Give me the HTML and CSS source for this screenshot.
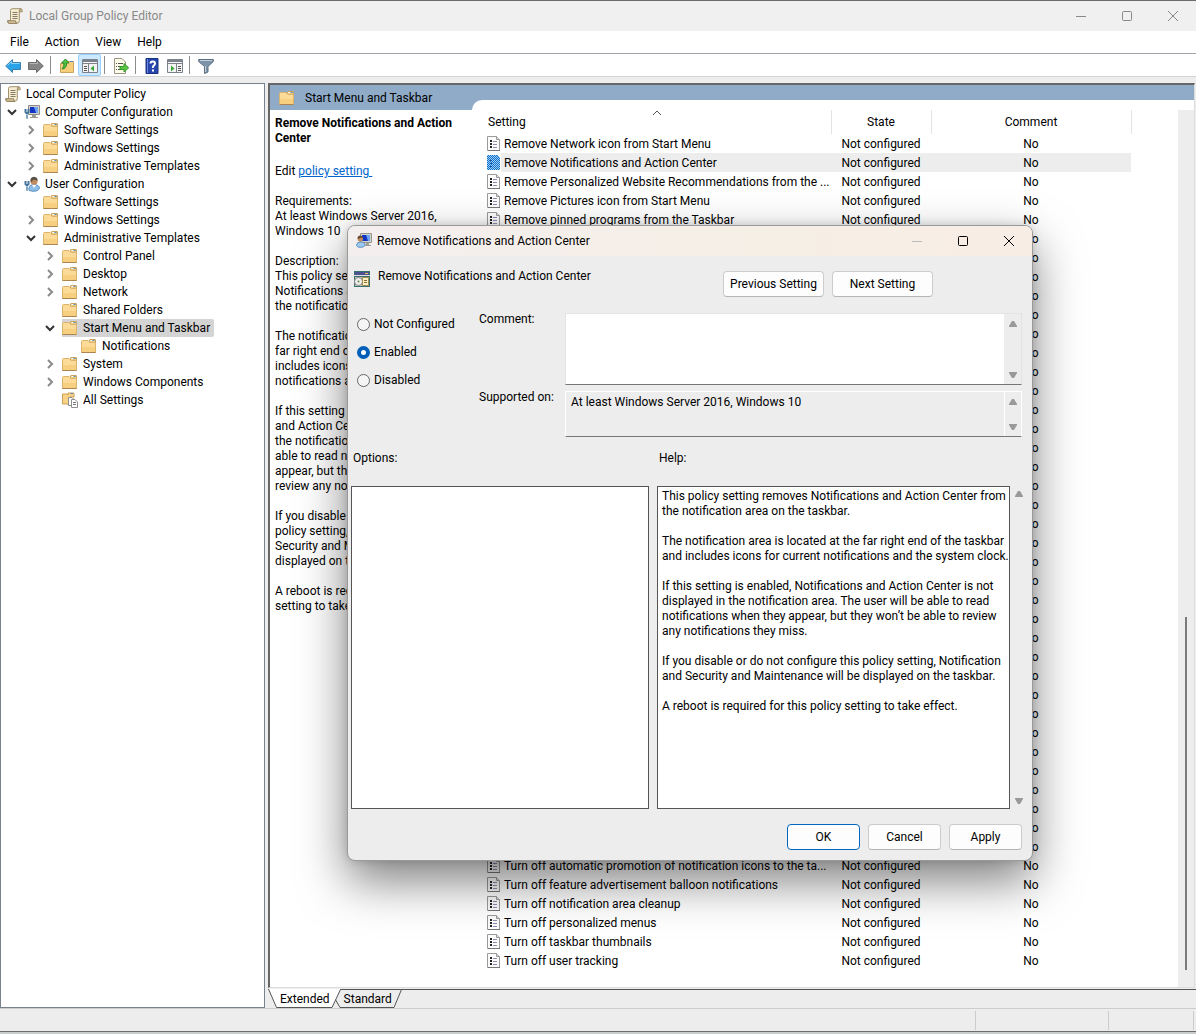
FILE: index.html
```html
<!DOCTYPE html>
<html lang="en">
<head>
  <meta charset="UTF-8" />
  <meta name="viewport" content="width=device-width, initial-scale=1" />
  <title>Local Group Policy Editor</title>
  <link rel="stylesheet" href="styles.css">
</head>
<body>
  <!-- shared icons -->
  <svg class="sprite" aria-hidden="true">
    <symbol id="scroll" viewBox="0 0 16 16">
      <path d="M3.5 2.5 Q3.5 .7 5.5 .7 H13.8 Q12.3 1.2 12.3 3 V12.5 Q12.3 15.3 9.8 15.3 H2 Q.5 15.2 .6 12.7 H3.5Z" fill="#f6ecd0" stroke="#a09070"/>
      <path d="M12.3 3.8 H15.2 V2.5 Q15.2 .7 13.6 .7Z" fill="#d8c391" stroke="#a09070"/>
      <path d="M.8 12.8 H8.6 Q8.6 15.2 10 15.3 H2 Q.7 15 .8 12.8Z" fill="#dcc899" stroke="#8f8062"/>
      <path d="M5.5 4.5H10.5M5.5 6.5H10.5M5.5 8.5H10.5M5.5 10.5H10.5" stroke="#857a66" fill="none"/>
    </symbol>
    <symbol id="folder" viewBox="0 0 16 16">
      <path d="M8.5 4 V2 Q8.5 1.5 9 1.5 H14 Q14.5 1.5 14.5 2 V6 H8.5Z" fill="#f0cd85" stroke="#c9a45e"/>
      <path d="M9.5 2.5H11.5" stroke="#fff"/><path d="M11.5 2.5H13.5" stroke="#4b8fd0"/>
      <path d="M.5 3.5 Q.5 2.5 1.5 2.5 H7 L9 4.5 H14.5 V14.5 H.5Z" fill="#fbdb97" stroke="#dcb36a"/>
      <path d="M1 9H14V14H1Z" fill="#f7cf80"/>
      <path d="M.5 14.5H14.5" stroke="#ab8550"/>
    </symbol>
    <symbol id="computer" viewBox="0 0 16 16">
      <path d="M4.5 1.5H15.5V10.5H4.5Z" fill="#d5d3c8" stroke="#8d8c86"/>
      <path d="M6 3H14V9H6Z" fill="#1235c4"/><path d="M10 3H14V9H12Z" fill="#6ba2f4"/>
      <path d="M8 11H12V13H14V14H6V13H8Z" fill="#9c9b95"/>
      <path d="M1.5 5V8L3 9.5L4.5 8V5M3 9V14.5" stroke="#44739b" stroke-width="2" fill="none"/>
      <path d="M3 10V14" stroke="#b9d9ee" fill="none"/>
    </symbol>
    <symbol id="user" viewBox="0 0 16 16">
      <path d="M5 14.5 Q4 9 9.5 8.5 Q15.5 8.7 15.5 12.5 Q14 15.5 9 15.3Z" fill="#8fc0ea" stroke="#5a8fc0"/>
      <path d="M8 8.7L10 12L12.3 8.7Z" fill="#fff"/>
      <circle cx="10" cy="5.3" r="3.5" fill="#c08b5f"/>
      <path d="M6.5 5 Q6 1 10 .7 Q14 1 13.5 5 Q11 3 9 4 Q8 6 7 6Z" fill="#5a5148"/>
      <path d="M1.5 5V8L3 9.5L4.5 8V5M3 9V14.5" stroke="#44739b" stroke-width="2" fill="none"/>
      <path d="M3 10V14" stroke="#b9d9ee" fill="none"/>
    </symbol>
    <symbol id="userpc" viewBox="0 0 16 16">
      <path d="M4.5 .5H15.5V9.5H4.5Z" fill="#d5d3c8" stroke="#96958f"/>
      <path d="M6 2H14V8H6Z" fill="#1235c4"/><path d="M10 2H14V8H12Z" fill="#6ba2f4"/>
      <path d="M10 10H13V12H15V13H9Z" fill="#9c9b95"/>
      <circle cx="4.3" cy="6" r="2.7" fill="#c08b5f"/>
      <path d="M1.5 5.5 Q1.5 2.5 4.3 2.5 Q6.5 2.5 6.8 5 Q4 4 3 6Z" fill="#6a4a30"/>
      <path d="M.5 12.5 Q.5 9 4.5 9 Q9 9 9 12.5 Q8 14.5 4 14.3 Q1 14.3 .5 12.5Z" fill="#9cc9ef" stroke="#5a8fc0"/>
    </symbol>
    <symbol id="allset" viewBox="0 0 16 16">
      <path d="M.5 2H5L6 3V1H12V5H8V12H.5Z" fill="#f8d287" stroke="#cfa055"/>
      <path d="M8.5 1.5H11" stroke="#4b8fd0"/>
      <path d="M6.5 5.5H10L12 7.5V13.5H6.5Z" fill="#fff" stroke="#8e8e8e"/>
      <path d="M9.5 7.5H13L15.5 10V15.5H9.5Z" fill="#fff" stroke="#8e8e8e"/>
      <path d="M11 10.5H14M11 12.5H14" stroke="#777"/>
    </symbol>
    <symbol id="policy" viewBox="0 0 14 16">
      <path d="M.5 .5H9.5L12.5 3.5V14.5H.5Z" fill="#fcfcfc" stroke="#9a9a9a"/>
      <path d="M9.5 .5V3.5H12.5" fill="#ddd" stroke="#9a9a9a"/>
      <path d="M1 14.5H13" stroke="#777"/>
      <path d="M3 5H5M3 8H5M3 11H5" stroke="#222" stroke-width="2"/>
      <path d="M6 5.5H10M6 8.5H10M6 11.5H10" stroke="#8b8bb0"/>
    </symbol>
    <symbol id="policy-on" viewBox="0 0 14 16">
      <path d="M0 0H10L13 3V15H0Z" fill="#0a71cf"/>
      <path d="M0 .5H10M0 2.5H13M0 4.5H13M0 6.5H13M0 8.5H13M0 10.5H13M0 12.5H13M0 14.5H13" stroke="#9fcdf2" stroke-dasharray="1 1"/>
      <path d="M1 1.5H11M1 3.5H13M1 5.5H13M1 7.5H13M1 9.5H13M1 11.5H13M1 13.5H13" stroke="#9fcdf2" stroke-dasharray="1 1"/>
      <path d="M3 5.5H5M3 8.5H5M3 11.5H5" stroke="#0a4c9e"/>
    </symbol>
    <symbol id="right" viewBox="0 0 10 10"><path d="M3 1L7 5L3 9" fill="none" stroke="#8a8a8a" stroke-width="2"/></symbol>
    <symbol id="down" viewBox="0 0 10 10"><path d="M1 3L5 7L9 3" fill="none" stroke="#333" stroke-width="2"/></symbol>
    <symbol id="min" viewBox="0 0 12 12"><path d="M1 6.5H11" stroke="currentColor"/></symbol>
    <symbol id="max" viewBox="0 0 12 12"><rect x="1.5" y="1.5" width="9" height="9" rx="1" fill="none" stroke="currentColor"/></symbol>
    <symbol id="close" viewBox="0 0 12 12"><path d="M1 1L11 11M11 1L1 11" stroke="currentColor"/></symbol>
    <symbol id="arrow-up" viewBox="0 0 10 8"><path d="M1 7V6L4 1H6L9 6V7Z" fill="#999"/></symbol>
    <symbol id="arrow-down" viewBox="0 0 10 8"><path d="M1 1H9V2L6 7H4L1 2Z" fill="#999"/></symbol>
  </svg>

  <div class="window">
    <header class="titlebar">
      <svg class="icon"><use href="#scroll"/></svg>
      <h1>Local Group Policy Editor</h1>
      <div class="window-buttons">
        <button type="button" aria-label="Minimize"><svg><use href="#min"/></svg></button>
        <button type="button" aria-label="Maximize"><svg><use href="#max"/></svg></button>
        <button type="button" aria-label="Close"><svg><use href="#close"/></svg></button>
      </div>
    </header>

    <nav class="menubar">
      <button type="button">File</button>
      <button type="button">Action</button>
      <button type="button">View</button>
      <button type="button">Help</button>
    </nav>

    <div class="toolbar">
      <button type="button" aria-label="Back"><svg class="icon" viewBox="0 0 16 16"><path d="M.7 8L7.500 1.500V4.500H15.500V11.500H7.500V14.500Z" fill="#2ba3e8" stroke="#3f7fae"/><path d="M2.500 7.500L6.500 3.500V5.500H14.500" stroke="#8bd5fa" fill="none"/></svg></button>
      <button type="button" aria-label="Forward"><svg class="icon" viewBox="0 0 16 16"><path d="M15.300 8L8.500 1.500V4.500H.5V11.500H8.500V14.500Z" fill="#858585" stroke="#6a6a6a"/><path d="M1.500 5.500H9.500V4" stroke="#b5b5b5" fill="none"/></svg></button>
      <span class="divider"></span>
      <button type="button" aria-label="Up one level"><svg class="icon" viewBox="0 0 16 16"><path d="M1.5 5.5H8L9 3.5H14.5V14.5H1.5Z" fill="#f6cd7b" stroke="#c9a45e"/><path d="M11 3.5H14" stroke="#4b8fd0"/><path d="M3 11Q8 10.5 7.5 5H10L6.5 1L2.5 5H5Q5.5 8.5 3 11Z" fill="#4fc246" stroke="#2d8a2b"/></svg></button>
      <button type="button" class="pressed" aria-label="Show console tree"><svg class="icon" viewBox="0 0 16 16"><path d="M.5 1.5H15.5V14.5H.5Z" fill="#f4f4f4" stroke="#7b828c"/><path d="M1 3H15" stroke="#7b828c" stroke-width="2"/><path d="M1 5.5H15M6.5 6V14" stroke="#7b828c"/><path d="M2 8.5H5M2 10.5H5M2 12.5H5" stroke="#555"/><path d="M12 7.5V13.5L8.5 10.5Z" fill="#38a838"/></svg></button>
      <span class="divider"></span>
      <button type="button" aria-label="Export list"><svg class="icon" viewBox="0 0 16 16"><path d="M1.5 .5H9L12.5 4V15.5H1.5Z" fill="#fdfbe9" stroke="#9b9782"/><path d="M3 5.5H4M5 5.5H10M3 8.5H4M5 8.5H8M3 11.5H4M5 11.5H8" stroke="#555"/><path d="M7 8.5H11V5.5L15.7 9.8L11 14V11.5H7Z" fill="#59c743" stroke="#379a2b"/></svg></button>
      <span class="divider"></span>
      <button type="button" aria-label="Help"><svg class="icon" viewBox="0 0 16 16"><path d="M2 .5H14V15.5H2Z" fill="#2646ae" stroke="#17307f"/><path d="M3.5 1V15" stroke="#6c87dc"/><path d="M6.5 5.5Q6.5 3.5 8.7 3.5Q11 3.5 11 5.5Q11 7 9.5 7.8Q8.8 8.3 8.8 10" fill="none" stroke="#fff" stroke-width="2"/><path d="M8 11.5H10V13.5H8Z" fill="#fff"/></svg></button>
      <button type="button" aria-label="Show action pane"><svg class="icon" viewBox="0 0 16 16"><path d="M.5 1.5H15.5V14.5H.5Z" fill="#f4f4f4" stroke="#7b828c"/><path d="M1 3H15" stroke="#7b828c" stroke-width="2"/><path d="M1 5.5H15M9.5 6V14" stroke="#7b828c"/><path d="M11 8.5H14M11 10.5H14M11 12.5H14" stroke="#555"/><path d="M4 7.5V13.5L7.5 10.5Z" fill="#38a838"/></svg></button>
      <span class="divider"></span>
      <button type="button" aria-label="Filter"><svg class="icon" viewBox="0 0 16 16"><path d="M.7 1.5H15.3V3.5L10 8.5V14L6.5 15.5V8.5L.7 3.5Z" fill="#7c93a8" stroke="#5c6f80"/><path d="M2 2.5H14" stroke="#c5d3df"/><path d="M7.5 8V14" stroke="#c5d3df"/></svg></button>
    </div>

    <main class="workspace">
      <section class="tree" aria-label="Console tree">
        <ul>
          <li class="row level-0"><svg class="icon"><use href="#scroll"/></svg><span>Local Computer Policy</span></li>
          <li class="row level-1"><svg class="chevron"><use href="#down"/></svg><svg class="icon"><use href="#computer"/></svg><span>Computer Configuration</span></li>
          <li class="row level-2"><svg class="chevron"><use href="#right"/></svg><svg class="icon"><use href="#folder"/></svg><span>Software Settings</span></li>
          <li class="row level-2"><svg class="chevron"><use href="#right"/></svg><svg class="icon"><use href="#folder"/></svg><span>Windows Settings</span></li>
          <li class="row level-2"><svg class="chevron"><use href="#right"/></svg><svg class="icon"><use href="#folder"/></svg><span>Administrative Templates</span></li>
          <li class="row level-1"><svg class="chevron"><use href="#down"/></svg><svg class="icon"><use href="#user"/></svg><span>User Configuration</span></li>
          <li class="row level-2"><svg class="chevron"></svg><svg class="icon"><use href="#folder"/></svg><span>Software Settings</span></li>
          <li class="row level-2"><svg class="chevron"><use href="#right"/></svg><svg class="icon"><use href="#folder"/></svg><span>Windows Settings</span></li>
          <li class="row level-2"><svg class="chevron"><use href="#down"/></svg><svg class="icon"><use href="#folder"/></svg><span>Administrative Templates</span></li>
          <li class="row level-3"><svg class="chevron"><use href="#right"/></svg><svg class="icon"><use href="#folder"/></svg><span>Control Panel</span></li>
          <li class="row level-3"><svg class="chevron"><use href="#right"/></svg><svg class="icon"><use href="#folder"/></svg><span>Desktop</span></li>
          <li class="row level-3"><svg class="chevron"><use href="#right"/></svg><svg class="icon"><use href="#folder"/></svg><span>Network</span></li>
          <li class="row level-3"><svg class="chevron"></svg><svg class="icon"><use href="#folder"/></svg><span>Shared Folders</span></li>
          <li class="row level-3 current"><svg class="chevron"><use href="#down"/></svg><svg class="icon"><use href="#folder"/></svg><span>Start Menu and Taskbar</span></li>
          <li class="row level-4"><svg class="chevron"></svg><svg class="icon"><use href="#folder"/></svg><span>Notifications</span></li>
          <li class="row level-3"><svg class="chevron"><use href="#right"/></svg><svg class="icon"><use href="#folder"/></svg><span>System</span></li>
          <li class="row level-3"><svg class="chevron"><use href="#right"/></svg><svg class="icon"><use href="#folder"/></svg><span>Windows Components</span></li>
          <li class="row level-3"><svg class="chevron"></svg><svg class="icon"><use href="#allset"/></svg><span>All Settings</span></li>
        </ul>
      </section>

      <section class="details">
        <div class="pane">
          <div class="side">
            <div class="pane-title"><svg class="icon"><use href="#folder"/></svg><h2>Start Menu and Taskbar</h2></div>
            <div class="description">
              <h3>Remove Notifications and Action
Center</h3>
              <p>Edit <a href="#">policy setting </a></p>
              <p>Requirements:
At least Windows Server 2016,
Windows 10</p>
              <p>Description:
This policy setting removes
Notifications and Action Center from
the notification area on the taskbar.</p>
              <p>The notification area is located at the
far right end of the taskbar and
includes icons for current
notifications and the system clock.</p>
              <p>If this setting is enabled, Notifications
and Action Center is not displayed in
the notification area. The user will be
able to read notifications when they
appear, but they won’t be able to
review any notifications they miss.</p>
              <p>If you disable or do not configure this
policy setting, Notification and
Security and Maintenance will be
displayed on the taskbar.</p>
              <p>A reboot is required for this policy
setting to take effect.</p>
            </div>
          </div>

          <div class="list">
            <div class="list-body">
              <table>
                <thead>
                  <tr>
                    <th class="col-setting">Setting<svg class="sort" viewBox="0 0 10 6"><path d="M1 5L5 1L9 5" fill="none" stroke="#555"/></svg></th>
                    <th class="col-state">State</th>
                    <th class="col-comment">Comment</th>
                    <th class="col-rest"></th>
                  </tr>
                </thead>
                <tbody id="settings"></tbody>
              </table>
              <div class="scrollbar"><span class="thumb"></span></div>
            </div>
          </div>
        </div>

        <div class="tabs">
          <svg class="tab-shape" viewBox="0 0 136 19" aria-hidden="true">
            <path d="M70.5 .5H133.5L126 18.5H72L66.5 9Z" fill="#ededed" stroke="#555"/>
            <path d="M0 0H72.5L64 18.5H8.5L0 0" fill="#fff"/>
            <path d="M.5 0L8.5 18.5H64L72.5 .5" fill="none" stroke="#555"/>
          </svg>
          <button type="button">Extended</button>
          <button type="button">Standard</button>
        </div>
      </section>
    </main>

    <footer class="statusbar"><span></span><span></span><span></span></footer>
  </div>

  <div class="dialog" role="dialog" aria-labelledby="dialog-title">
    <header class="dialog-titlebar">
      <svg class="icon"><use href="#userpc"/></svg>
      <h2 id="dialog-title">Remove Notifications and Action Center</h2>
      <div class="window-buttons">
        <button type="button" class="disabled" aria-label="Minimize" disabled><svg><use href="#min"/></svg></button>
        <button type="button" aria-label="Maximize"><svg><use href="#max"/></svg></button>
        <button type="button" aria-label="Close"><svg><use href="#close"/></svg></button>
      </div>
    </header>

    <form class="policy-form">
      <div class="policy-head">
        <svg class="icon" viewBox="0 0 16 16"><path d="M0 0H16V16H0Z" fill="#38726f"/><path d="M1 1H15V4H1Z" fill="#4d5390"/><path d="M11 2.5H14" stroke="#e8c65a"/><path d="M0 4.5H16" stroke="#ddd"/><path d="M1 6H15V15H1Z" fill="#c9c6b4"/><circle cx="4.5" cy="10.5" r="4" fill="#eee" stroke="#888"/><circle cx="4.5" cy="10.5" r="1" fill="#638a3a"/><path d="M8.5 6.5H14.5V14.5H8.5Z" fill="#fdf0c4" stroke="#a58d52"/><path d="M10 9.5H13M10 11.5H13" stroke="#886c33"/></svg>
        <span class="policy-name">Remove Notifications and Action Center</span>
        <button type="button" class="btn wide">Previous Setting</button>
        <button type="button" class="btn wide">Next Setting</button>
      </div>

      <div class="policy-state">
        <div class="radios">
          <label><input type="radio" name="state" />Not Configured</label>
          <label><input type="radio" name="state" checked />Enabled</label>
          <label><input type="radio" name="state" />Disabled</label>
        </div>
        <div class="fields">
          <label for="comment">Comment:</label>
          <div class="field">
            <textarea id="comment"></textarea>
            <div class="arrows"><svg><use href="#arrow-up"/></svg><svg><use href="#arrow-down"/></svg></div>
          </div>
          <label for="supported">Supported on:</label>
          <div class="field readonly">
            <textarea id="supported" readonly>At least Windows Server 2016, Windows 10</textarea>
            <div class="arrows"><svg><use href="#arrow-up"/></svg><svg><use href="#arrow-down"/></svg></div>
          </div>
        </div>
      </div>

      <div class="panels">
        <h3>Options:</h3>
        <h3>Help:</h3>
        <div class="panel"></div>
        <div class="help">
          <div class="panel">
            <p>This policy setting removes Notifications and Action Center from
the notification area on the taskbar.</p>
            <p>The notification area is located at the far right end of the taskbar
and includes icons for current notifications and the system clock.</p>
            <p>If this setting is enabled, Notifications and Action Center is not
displayed in the notification area. The user will be able to read
notifications when they appear, but they won’t be able to review
any notifications they miss.</p>
            <p>If you disable or do not configure this policy setting, Notification
and Security and Maintenance will be displayed on the taskbar.</p>
            <p>A reboot is required for this policy setting to take effect.</p>
          </div>
          <div class="arrows"><svg><use href="#arrow-up"/></svg><svg><use href="#arrow-down"/></svg></div>
        </div>
      </div>

      <div class="actions">
        <button type="submit" class="btn primary">OK</button>
        <button type="button" class="btn">Cancel</button>
        <button type="button" class="btn">Apply</button>
      </div>
    </form>
  </div>

  <script src="script.js"></script>
</body>
</html>
```
FILE: styles.css
```css
* {
  margin: 0;
  padding: 0;
  box-sizing: border-box;
}
body {
  font-family: "Segoe UI", Roboto, "Open Sans", sans-serif;
  font-size: 12px;
  line-height: 15px;
  color: #000;
  background: #ededed;
  position: relative;
  overflow: hidden;
}
button, textarea {
  font: inherit;
  color: inherit;
}
button {
  background: none;
  border: none;
}
h1, h2, h3 {
  font-size: 12px;
  font-weight: 400;
}
svg {
  display: block;
  flex: none;
}
.sprite {
  position: absolute;
  width: 0;
  height: 0;
}
.icon {
  width: 16px;
  height: 16px;
}

/* main window */
.window {
  display: flex;
  flex-direction: column;
  min-height: 100vh;
  border-top: 1px solid #6b6b6b;
  border-bottom: 2px solid #c9cdcd;
}
.titlebar {
  display: flex;
  align-items: center;
  gap: 6px;
  height: 30px;
  padding-left: 7px;
  background: #f0f0f0;
  color: #888;
}
.window-buttons {
  display: flex;
  margin-left: auto;
}
.window-buttons button {
  display: flex;
  align-items: center;
  justify-content: center;
  width: 46px;
  height: 30px;
}
.window-buttons svg {
  width: 12px;
  height: 12px;
}
.menubar {
  display: flex;
  gap: 16px;
  height: 23px;
  padding: 0 10px;
  background: #fff;
  border-bottom: 1px solid #a0a5ad;
}
.toolbar {
  display: flex;
  align-items: center;
  height: 23px;
  padding-left: 1px;
  background: #fff;
  border-bottom: 1px solid #d4d4d4;
}
.toolbar button {
  display: flex;
  align-items: center;
  justify-content: center;
  width: 23px;
  height: 22px;
  padding-top: 2px;
}
.toolbar .pressed {
  background: #cce8ff;
  border: 1px solid #99d1ff;
  border-radius: 2px;
}
.divider {
  width: 1px;
  height: 18px;
  margin: 0 4px 0 3px;
  background: #8c8c8c;
}
.workspace {
  display: flex;
  flex: 1;
  gap: 3px;
  padding-top: 6px;
}

/* console tree */
.tree {
  width: 265px;
  padding-top: 1px;
  background: #fff;
  border: 1px solid #7a8290;
}
.tree ul {
  list-style: none;
}
.row {
  display: flex;
  align-items: center;
  height: 18px;
}
.row span {
  height: 18px;
  line-height: 18px;
  padding: 0 4px 0 5px;
}
.row .chevron {
  width: 10px;
  height: 10px;
  margin-right: 7px;
}
.level-0 { padding-left: 4px; }
.level-1 { padding-left: 6px; }
.level-2 { padding-left: 25px; }
.level-3 { padding-left: 44px; }
.level-4 { padding-left: 63px; }
.current span {
  background: #d4d4d4;
  border-radius: 0 2px 2px 0;
}
.current .icon {
  background: #d4d4d4;
  height: 18px;
}

/* right side */
.details {
  flex: 1;
  display: flex;
  flex-direction: column;
  min-width: 0;
}
.pane {
  flex: 1;
  display: flex;
  margin-right: 1px;
  background: #fff;
  border: 2px solid #666;
  border-right: 1px solid #ddd;
  border-bottom: 1px solid #ddd;
}
.side {
  width: 202px;
}
.pane-title {
  display: flex;
  align-items: center;
  gap: 10px;
  height: 25px;
  padding: 1px 0 0 9px;
  background: #8fabc8;
}
.description {
  display: flex;
  flex-direction: column;
  gap: 15px;
  padding: 6px 5px;
  white-space: pre;
}
.description h3 {
  font-weight: 700;
  padding-bottom: 3px;
}
a {
  color: #0066cc;
}
.list {
  flex: 1;
  display: flex;
  min-width: 0;
  background: #8fabc8;
  padding-top: 15px;
}
.list-body {
  flex: 1;
  display: grid;
  grid-template-columns: minmax(0, 1fr) 16px;
  padding: 10px 0 0 15px;
  background: #fff;
  border-top-left-radius: 10px;
}
table {
  width: 100%;
  align-self: start;
  table-layout: fixed;
  border-collapse: collapse;
}
th {
  height: 24px;
  font-weight: 400;
  border-right: 1px solid #e3e3e3;
}
th.col-setting {
  position: relative;
  width: 344px;
  text-align: left;
  padding-left: 1px;
}
.sort {
  position: absolute;
  top: 0;
  left: 165px;
  width: 10px;
  height: 6px;
}
.col-state { width: 100px; }
.col-comment { width: 200px; }
th.col-rest { border: none; }
td {
  height: 19px;
  padding-top: 2px;
  text-align: center;
  white-space: nowrap;
}
td:first-child {
  padding-top: 0;
  text-align: left;
}
.setting {
  display: flex;
  align-items: center;
}
.setting svg {
  width: 14px;
  height: 16px;
}
.setting span {
  flex: 1;
  height: 19px;
  line-height: 21px;
  padding-left: 3px;
  overflow: hidden;
}
.selected .setting span,
.selected .shade {
  background: #ededed;
}
.scrollbar {
  display: flex;
  flex-direction: column;
  justify-content: flex-end;
  align-items: center;
  padding-bottom: 17px;
  background: #ededed;
}
.thumb {
  width: 2px;
  height: 41%;
  background: #7a7a7a;
}
.tabs {
  position: relative;
  display: flex;
  gap: 14px;
  height: 19px;
  margin-top: 1px;
  padding-left: 12px;
  border-top: 1px solid #555;
}
.tab-shape {
  position: absolute;
  left: 0;
  top: -1px;
  width: 136px;
  height: 19px;
}
.tabs button {
  position: relative;
  height: 18px;
}
.statusbar {
  display: flex;
  height: 24px;
  padding: 2px 2px 1px 0;
  border-top: 1px solid #ccc;
  border-bottom: 1px solid #6b6b6b;
}
.statusbar span {
  border-right: 1px solid #ccc;
  width: 133px;
}
.statusbar span:first-child {
  flex: 1;
}
.statusbar span:last-child {
  width: 85px;
}

/* policy dialog */
.dialog {
  position: absolute;
  left: 347px;
  top: 225px;
  width: 686px;
  background: #ededed;
  border: 1px solid #999;
  border-radius: 8px;
  box-shadow: 0 20px 48px rgba(0,0,0,0.5), 0 0 10px rgba(0,0,0,0.15);
  overflow: hidden;
}
.dialog-titlebar {
  display: flex;
  align-items: center;
  gap: 5px;
  height: 30px;
  padding-left: 8px;
  background: linear-gradient(90deg, #f4efef, #f6efe6 60%, #f8ede4);
}
.dialog-titlebar .disabled {
  color: #bbb;
}
.policy-form {
  padding: 0 10px 10px 3px;
}
.policy-head {
  display: flex;
  gap: 8px;
  padding: 15px 89px 16px 3px;
}
.policy-name {
  flex: 1;
  height: 15px;
  line-height: 10px;
}
.btn {
  width: 73px;
  height: 26px;
  background: #fdfdfd;
  border: 1px solid #ccc;
  border-bottom-color: #b5b5b5;
  border-radius: 4px;
  white-space: nowrap;
}
.btn.wide {
  width: 101px;
}
.btn.primary {
  border-color: #0067c0;
}
.policy-state {
  display: flex;
}
.radios {
  display: flex;
  flex-direction: column;
  gap: 8px;
  width: 128px;
  padding: 1px 0 0 6px;
}
.radios label {
  display: flex;
  align-items: center;
  gap: 4px;
  height: 20px;
}
.radios input {
  appearance: none;
  width: 13px;
  height: 13px;
  background: #f5f5f5;
  border: 1px solid #666;
  border-radius: 50%;
}
.radios input:checked {
  background: #fff;
  border: 4px solid #005fb8;
}
.fields {
  flex: 1;
  display: grid;
  grid-template-columns: 86px 1fr;
  row-gap: 6px;
}
.fields label {
  line-height: 12px;
}
.field {
  display: flex;
  height: 72px;
  background: #fff;
  border: 1px solid #e3e3e3;
  border-bottom-color: #777;
}
.field.readonly {
  height: 46px;
  background: #ededed;
  border-color: #fff;
  border-bottom-color: #777;
}
.field textarea {
  flex: 1;
  padding: 3px 5px;
  border: none;
  outline: none;
  background: none;
  resize: none;
  overflow: hidden;
}
.arrows {
  display: flex;
  flex-direction: column;
  justify-content: space-between;
  align-items: center;
  width: 17px;
  padding: 6px 0 5px;
  background: #ededed;
}
.readonly .arrows {
  border-left: 1px solid #fff;
}
.arrows svg {
  width: 10px;
  height: 8px;
}
.panels {
  display: grid;
  grid-template-columns: 298px minmax(0, 1fr);
  column-gap: 8px;
  row-gap: 20px;
  margin-top: 14px;
  margin-right: -5px;
}
.panels h3 {
  padding-left: 2px;
}
.panel {
  min-height: 323px;
  background: #fff;
  border: 1px solid #555;
}
.help {
  display: flex;
}
.help .panel {
  flex: 1;
  min-width: 0;
  display: flex;
  flex-direction: column;
  gap: 15px;
  padding: 2px 4px;
  white-space: pre;
}
.help .arrows {
  padding: 4px 0;
}
.actions {
  display: flex;
  justify-content: flex-end;
  gap: 8px;
  margin-top: 15px;
}
```
FILE: script.js
```js
const first = [
  'Remove Network icon from Start Menu',
  'Remove Notifications and Action Center',
  'Remove Personalized Website Recommendations from the ...',
  'Remove Pictures icon from Start Menu',
  'Remove pinned programs from the Taskbar'
];
const last = [
  'Turn off automatic promotion of notification icons to the ta...',
  'Turn off feature advertisement balloon notifications',
  'Turn off notification area cleanup',
  'Turn off personalized menus',
  'Turn off taskbar thumbnails',
  'Turn off user tracking'
];

const body = document.getElementById('settings');

function addRow(name, selected) {
  const tr = document.createElement('tr');
  if (selected) tr.className = 'selected';
  const icon = selected ? 'policy-on' : 'policy';
  const setting = name ? `<div class="setting"><svg><use href="#${icon}"/></svg><span>${name}</span></div>` : '';
  const state = name ? 'Not configured' : '';
  tr.innerHTML = `<td>${setting}</td><td class="shade">${state}</td><td class="shade">No</td><td></td>`;
  body.appendChild(tr);
}

first.forEach((name, i) => addRow(name, i === 1));
// rows under the dialog
for (let i = 0; i < 33; i++) addRow('', false);
last.forEach(name => addRow(name, false));
```
